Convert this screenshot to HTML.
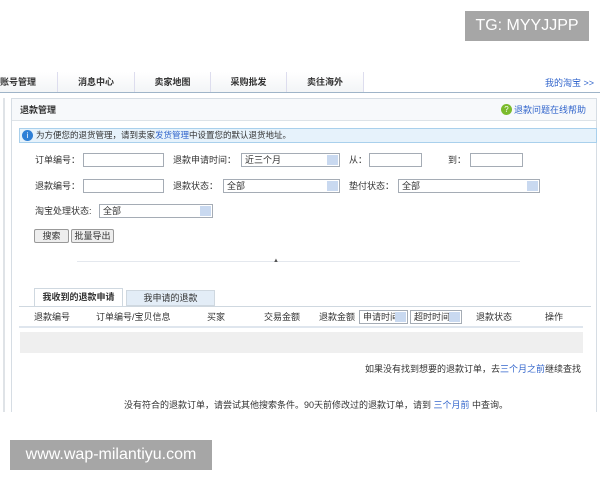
<!DOCTYPE html>
<html><head><meta charset="utf-8"><style>
*{margin:0;padding:0;box-sizing:border-box}
body{width:600px;height:480px;background:#fff;position:relative;overflow:hidden;font-family:"Liberation Sans","Noto Sans CJK SC",sans-serif;font-size:9px;color:#333}
.a{position:absolute;white-space:nowrap;line-height:12px}
.in{position:absolute;height:14px;border:1px solid #a5acb5;background:#fff}
.sel{position:absolute;height:14px;border:1px solid #a5acb5;background:#fff;font-size:9px;padding-left:3px;line-height:12px;white-space:nowrap;overflow:hidden}
.sel:after{content:"";position:absolute;right:1px;top:1px;width:11px;height:10px;background:#c9d9f0}
.tab{position:absolute;top:72px;height:21px;border-right:1px solid #dde;line-height:20px;text-align:center;font-weight:bold;font-size:9px;background:linear-gradient(#fff,#f2f4f6);white-space:nowrap}
.btn{position:absolute;top:229px;height:14px;border:1px solid #999;border-radius:2px;background:#eee;font-size:9px;line-height:12px;text-align:center;white-space:nowrap}
</style></head><body>
<div class="a" style="left:465px;top:11px;width:124px;height:30px;background:#a6a6a6;color:#fff;font-size:16px;line-height:30px;text-align:center">TG: MYYJJPP</div>

<div class="a" style="left:0;top:72px;width:364px;height:21px;border-top:1px solid #e4e8ec"></div>
<div class="tab" style="left:0;width:58px;text-align:left">账号管理</div>
<div class="tab" style="left:58px;width:77px">消息中心</div>
<div class="tab" style="left:135px;width:76px">卖家地图</div>
<div class="tab" style="left:211px;width:76px">采购批发</div>
<div class="tab" style="left:287px;width:77px">卖往海外</div>
<div class="a" style="left:0;top:92px;width:600px;height:1px;background:#9fb4c8"></div>
<div class="a" style="left:545px;top:77px;color:#36c">我的淘宝 &gt;&gt;</div>

<div class="a" style="left:3px;top:98px;width:2px;height:314px;background:#dfe3e7"></div>
<div class="a" style="left:11px;top:98px;width:586px;height:314px;border:1px solid #d6dde4;border-bottom:none"></div>
<div class="a" style="left:12px;top:99px;width:584px;height:22px;background:#f7f9fb;border-bottom:1px solid #dde3e8"></div>
<div class="a" style="left:20px;top:104px;font-weight:bold">退款管理</div>
<div class="a" style="left:501px;top:104px;width:11px;height:11px;border-radius:50%;background:#7bbb2c;color:#fff;font-size:8px;text-align:center;line-height:11px">?</div>
<div class="a" style="left:514px;top:104px;color:#36c">退款问题在线帮助</div>

<div class="a" style="left:19px;top:128px;width:578px;height:15px;background:#e6f2fb;border:1px solid #a9d0ec"></div>
<div class="a" style="left:22px;top:130px;width:11px;height:11px;border-radius:50%;background:#2e7fd6;color:#fff;font-size:8px;text-align:center;line-height:11px">i</div>
<div class="a" style="left:36px;top:129px;font-size:8.5px">为方便您的退货管理，请到卖家<span style="color:#36c">发货管理</span>中设置您的默认退货地址。</div>

<div class="a" style="left:35px;top:154px">订单编号：</div>
<div class="in" style="left:83px;top:153px;width:81px"></div>
<div class="a" style="left:173px;top:154px">退款申请时间：</div>
<div class="sel" style="left:241px;top:153px;width:99px">近三个月</div>
<div class="a" style="left:349px;top:154px">从：</div>
<div class="in" style="left:369px;top:153px;width:53px"></div>
<div class="a" style="left:448px;top:154px">到：</div>
<div class="in" style="left:470px;top:153px;width:53px"></div>

<div class="a" style="left:35px;top:180px">退款编号：</div>
<div class="in" style="left:83px;top:179px;width:81px"></div>
<div class="a" style="left:173px;top:180px">退款状态：</div>
<div class="sel" style="left:223px;top:179px;width:117px">全部</div>
<div class="a" style="left:349px;top:180px">垫付状态：</div>
<div class="sel" style="left:398px;top:179px;width:142px">全部</div>

<div class="a" style="left:35px;top:205px">淘宝处理状态:</div>
<div class="sel" style="left:99px;top:204px;width:114px">全部</div>

<div class="btn" style="left:34px;width:35px">搜索</div>
<div class="btn" style="left:71px;width:43px">批量导出</div>

<div class="a" style="left:77px;top:261px;width:443px;height:1px;background:#e4e8ee"></div>
<div class="a" style="left:273px;top:255px;font-size:6px;color:#555">▲</div>

<div class="a" style="left:34px;top:288px;width:89px;height:19px;background:#fff;border:1px solid #cfd8e0;border-bottom:none;font-weight:bold;line-height:17px;text-align:center">我收到的退款申请</div>
<div class="a" style="left:126px;top:290px;width:89px;height:16px;background:#e3edf7;border:1px solid #cfd8e0;line-height:14px;text-align:center">我申请的退款</div>
<div class="a" style="left:19px;top:306px;width:572px;height:1px;background:#cfd8e0"></div>
<div class="a" style="left:19px;top:326px;width:564px;height:2px;background:#dfe6ee"></div>
<div class="a" style="left:34px;top:311px">退款编号</div>
<div class="a" style="left:96px;top:311px">订单编号/宝贝信息</div>
<div class="a" style="left:207px;top:311px">买家</div>
<div class="a" style="left:264px;top:311px">交易金额</div>
<div class="a" style="left:319px;top:311px">退款金额</div>
<div class="sel" style="left:359px;top:310px;width:49px">申请时间</div>
<div class="sel" style="left:410px;top:310px;width:52px">超时时间</div>
<div class="a" style="left:476px;top:311px">退款状态</div>
<div class="a" style="left:545px;top:311px">操作</div>

<div class="a" style="left:20px;top:332px;width:563px;height:21px;background:#efefef"></div>

<div class="a" style="left:365px;top:363px">如果没有找到想要的退款订单，去<span style="color:#36c">三个月之前</span>继续查找</div>
<div class="a" style="left:124px;top:399px">没有符合的退款订单，请尝试其他搜索条件。90天前修改过的退款订单，请到 <span style="color:#36c">三个月前</span> 中查询。</div>

<div class="a" style="left:10px;top:440px;width:202px;height:30px;background:#a6a6a6;color:#fff;font-size:16px;line-height:30px;text-align:center">www.wap-milantiyu.com</div>
</body></html>
